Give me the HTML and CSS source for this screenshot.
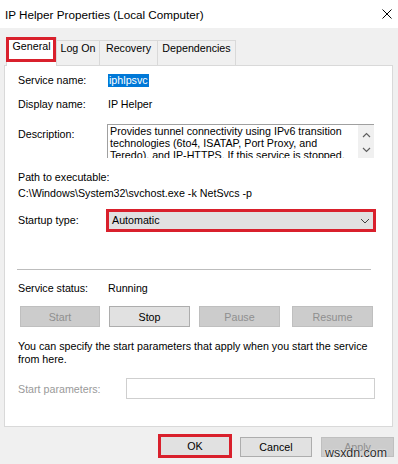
FILE: index.html
```html
<!DOCTYPE html>
<html>
<head>
<meta charset="utf-8">
<link rel="stylesheet" href="styles.css">
</head>
<body>
<div class="window">
  <header class="titlebar">
    <span class="title">IP Helper Properties (Local Computer)</span>
    <svg class="close" width="10" height="10" viewBox="0 0 10 10"><path d="M0.5 0.5 L9.5 9.5 M9.5 0.5 L0.5 9.5" stroke="#000" stroke-width="1" fill="none"/></svg>
  </header>
  <nav class="tabs">
    <div class="tab active">General</div>
    <div class="tab logon">Log On</div>
    <div class="tab recovery">Recovery</div>
    <div class="tab deps">Dependencies</div>
  </nav>
  <section class="panel">
    <div class="field r-service">
      <span>Service name:</span>
      <span><span class="sel">iphlpsvc</span></span>
    </div>
    <div class="field r-display">
      <span>Display name:</span>
      <span class="val">IP Helper</span>
    </div>
    <div class="field r-desc">
      <span class="desc-label">Description:</span>
      <div class="desc-box">
        <div class="desc-text">Provides tunnel connectivity using IPv6 transition<br>technologies (6to4, ISATAP, Port Proxy, and<br>Teredo), and IP-HTTPS. If this service is stopped,</div>
        <div class="scrollbar">
          <svg width="9" height="6" viewBox="0 0 9 6"><path d="M1 5 L4.5 1.5 L8 5" stroke="#606060" stroke-width="1.2" fill="none"/></svg>
          <svg width="9" height="6" viewBox="0 0 9 6"><path d="M1 1 L4.5 4.5 L8 1" stroke="#606060" stroke-width="1.2" fill="none"/></svg>
        </div>
      </div>
    </div>
    <div class="line r-path">Path to executable:</div>
    <div class="line r-pathval">C:\Windows\System32\svchost.exe -k NetSvcs -p</div>
    <div class="field r-startup">
      <span>Startup type:</span>
      <div class="combo">
        <span>Automatic</span>
        <svg width="10" height="6" viewBox="0 0 10 6"><path d="M1 1 L5 5 L9 1" stroke="#404040" stroke-width="1" fill="none"/></svg>
      </div>
    </div>
    <div class="separator"></div>
    <div class="field r-status">
      <span>Service status:</span>
      <span class="val">Running</span>
    </div>
    <div class="svc-buttons">
      <div class="btn disabled b-start">Start</div>
      <div class="btn b-stop">Stop</div>
      <div class="btn disabled b-pause">Pause</div>
      <div class="btn disabled b-resume">Resume</div>
    </div>
    <p class="hint">You can specify the start parameters that apply when you start the service<br>from here.</p>
    <div class="params">
      <span class="params-label">Start parameters:</span>
      <div class="params-input"></div>
    </div>
  </section>
  <footer class="actions">
    <div class="btn ok">OK</div>
    <div class="btn cancel">Cancel</div>
    <div class="btn disabled apply">Apply</div>
  </footer>
  <span class="watermark">wsxdn.com</span>
</div>
</body>
</html>
```
FILE: styles.css
```css
html, body {
  margin: 0;
  padding: 0;
}
body {
  background: #f0f0f0;
  font-family: "Liberation Sans", Arial, sans-serif;
  font-size: 10.7px;
  color: #000;
}
.window {
  position: relative;
  width: 398px;
  height: 464px;
  overflow: hidden;
}
.titlebar {
  height: 28px;
  background: #fff;
  display: flex;
  align-items: center;
  justify-content: space-between;
  padding: 0 6px 0 5px;
  box-sizing: border-box;
}
.title {
  font-size: 11.7px;
}
.close {
  display: block;
}
.tabs {
  display: flex;
  align-items: flex-end;
  height: 37px;
  padding-left: 6px;
  box-sizing: border-box;
}
.tab {
  height: 25px;
  box-sizing: border-box;
  border: 1px solid #d9d9d9;
  border-bottom: none;
  border-left: none;
  padding-top: 1px;
  line-height: 13px;
  text-align: center;
}
.tab.active {
  width: 51px;
  height: 29px;
  margin-bottom: -1px;
  background: #fff;
  border-left: 1px solid #d9d9d9;
  padding-top: 2px;
  position: relative;
  z-index: 1;
}
.tab.active::after {
  content: "";
  position: absolute;
  left: -1px;
  right: 0;
  top: -1px;
  height: 25px;
  border: 3px solid #d9202c;
  box-sizing: border-box;
}
.logon { width: 43px; }
.recovery { width: 58px; }
.deps { width: 78px; }
.panel {
  margin-left: 4px;
  width: 389px;
  height: 362px;
  box-sizing: border-box;
  border: 1px solid #d9d9d9;
  background: #fff;
  padding-left: 13px;
  display: flex;
  flex-direction: column;
}
.field {
  display: grid;
  grid-template-columns: 89px 1fr;
  align-items: center;
  line-height: 15px;
}
.val {
  padding-left: 1px;
}
.sel {
  display: inline-block;
  margin-left: 1px;
  padding: 0 1px;
  background: #0078d7;
  color: #fff;
  line-height: 13px;
}
.r-service { margin-top: 7px; }
.r-display { margin-top: 9px; }
.r-desc {
  margin-top: 12px;
  align-items: start;
}
.desc-label { margin-top: 3px; }
.desc-box {
  width: 267px;
  height: 34px;
  box-sizing: border-box;
  border-top: 1px solid #a0a0a0;
  border-left: 1px solid #a0a0a0;
  display: flex;
}
.desc-text {
  flex: 1;
  overflow: hidden;
  padding-left: 2px;
  line-height: 12px;
  white-space: nowrap;
}
.scrollbar {
  width: 16px;
  background: #f0f0f0;
  display: flex;
  flex-direction: column;
  align-items: center;
  gap: 9px;
  padding-top: 7px;
  box-sizing: border-box;
}
.scrollbar svg { display: block; }
.line { line-height: 15px; }
.r-path { margin-top: 12px; }
.r-pathval { margin-top: 1px; }
.r-startup { margin-top: 8px; }
.combo {
  margin-left: -1px;
  width: 270px;
  height: 23px;
  box-sizing: border-box;
  border: 3px solid #d9202c;
  background: #e1e1e1;
  display: flex;
  align-items: center;
  justify-content: space-between;
  padding: 0 3px 0 3px;
}
.combo svg { display: block; }
.separator {
  margin-top: 37px;
  margin-left: -1px;
  width: 354px;
  height: 1px;
  background: #bdbdbd;
}
.r-status { margin-top: 11px; }
.svc-buttons {
  margin-top: 10px;
  display: flex;
  padding-left: 2px;
}
.btn {
  box-sizing: border-box;
  height: 21px;
  display: flex;
  align-items: center;
  justify-content: center;
  background: #e1e1e1;
  border: 1px solid #adadad;
}
.btn.disabled {
  background: #cccccc;
  border-color: #bfbfbf;
  color: #8f8f8f;
}
.b-start { width: 80px; }
.b-stop { width: 81px; margin-left: 9px; }
.b-pause { width: 81px; margin-left: 9px; }
.b-resume { width: 81px; margin-left: 12px; }
.hint {
  margin: 13px 0 0 0;
  line-height: 13px;
}
.params {
  margin-top: 12px;
  display: grid;
  grid-template-columns: 108px 249px;
  align-items: center;
}
.params-label {
  color: #9a9a9a;
}
.params-input {
  height: 21px;
  box-sizing: border-box;
  border: 1px solid #cfcfcf;
  background: #fff;
}
.actions {
  display: flex;
  align-items: flex-start;
  padding: 7px 0 0 158px;
}
.ok {
  width: 74px;
  height: 24px;
  border: 3px solid #d9202c;
}
.cancel {
  width: 72px;
  height: 20px;
  margin: 3px 0 0 8px;
}
.apply {
  width: 73px;
  height: 20px;
  margin: 3px 0 0 9px;
}
.watermark {
  position: absolute;
  left: 325px;
  top: 446px;
  font-size: 12.4px;
  line-height: 14px;
  color: #2a2a2a;
  text-shadow: 0 0 2px #fff, 0 0 1px #fff;
}
```
